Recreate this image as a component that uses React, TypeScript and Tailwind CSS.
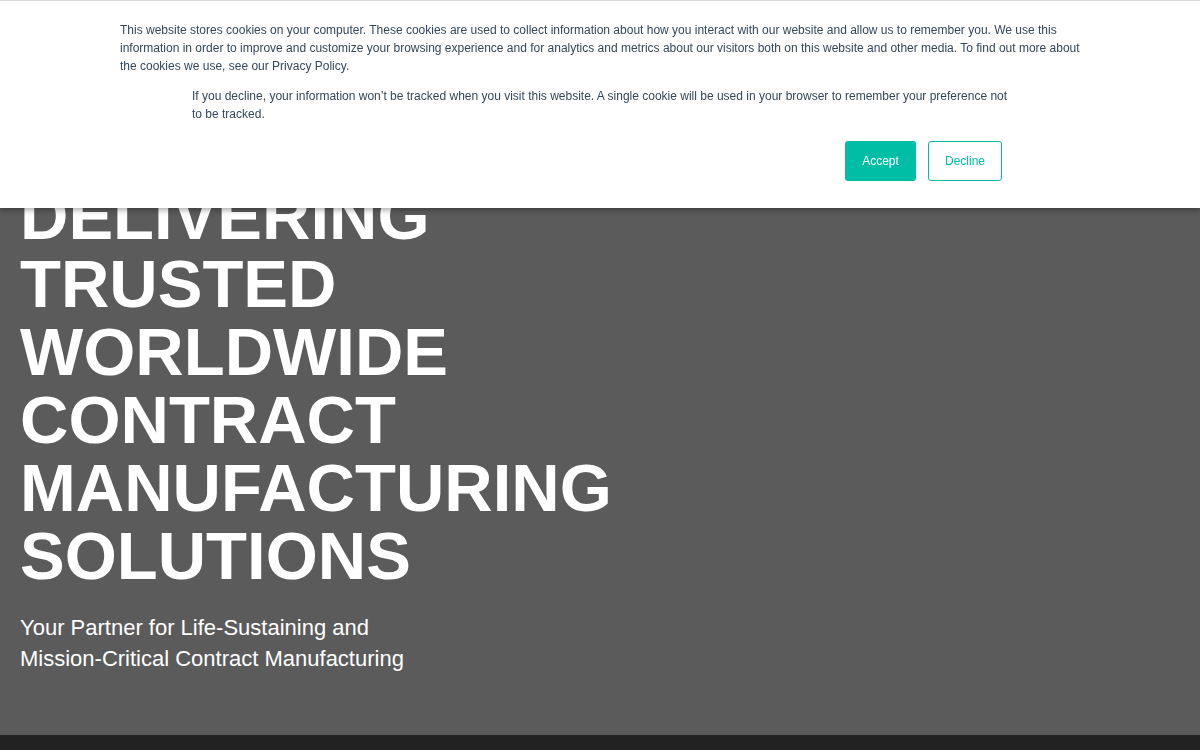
import React from "react";

export default function App() {
  return (
    <div className="relative w-full min-h-[750px] bg-[#222222]" style={{ fontFamily: '"Liberation Sans", Arial, sans-serif' }}>
      <section className="h-[735px] bg-[#5b5b5b] px-5 pt-[182px]">
        <h1 className="text-[67px] leading-[68px] font-bold text-white uppercase">
          Delivering
          <br />
          Trusted
          <br />
          Worldwide
          <br />
          Contract
          <br />
          Manufacturing
          <br />
          Solutions
        </h1>
        <p className="mt-[22px] text-[22px] leading-[31px] text-white">
          Your Partner for Life-Sustaining and
          <br />
          Mission-Critical Contract Manufacturing
        </p>
      </section>

      <div className="fixed top-0 left-0 right-0 z-50 h-[208px] bg-white border-t border-[#d6d6d6] shadow-[0_2px_6px_rgba(0,0,0,0.35)]">
        <div className="mx-auto w-[960px] pt-5 text-[12px] leading-[18px] text-[#33475b]">
          <p>
            This website stores cookies on your computer. These cookies are used to collect information about how you interact with our website and allow us to remember you. We use this information in order to improve and customize your browsing experience and for analytics and metrics about our visitors both on this website and other media. To find out more about the cookies we use, see our Privacy Policy.
          </p>
          <div className="mx-auto w-[816px]">
            <p className="mt-3">
              If you decline, your information won’t be tracked when you visit this website. A single cookie will be used in your browser to remember your preference not to be tracked.
            </p>
            <div className="mt-[18px] flex justify-end gap-3 pr-[6px]">
              <button className="h-10 w-[71px] rounded-[3px] bg-[#00bda5] text-[12px] text-white">Accept</button>
              <button className="h-10 w-[74px] rounded-[3px] border border-[#00bda5] bg-white text-[12px] text-[#00bda5]">Decline</button>
            </div>
          </div>
        </div>
      </div>
    </div>
  );
}
